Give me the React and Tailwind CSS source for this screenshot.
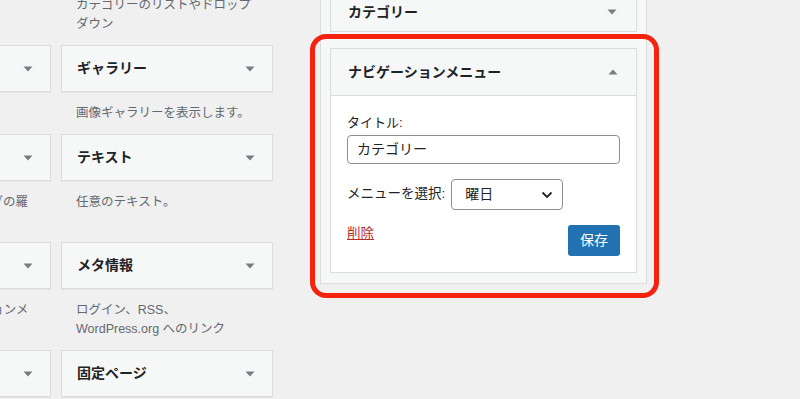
import React from "react";

const FONT = {
  fontFamily: '"Liberation Sans", "Noto Sans CJK JP", sans-serif',
};

const Caret = ({ up }) => (
  <svg width="10" height="6" viewBox="0 0 10 6" className="shrink-0">
    <polygon
      points={up ? "5,0.5 9.5,5.5 0.5,5.5" : "0.5,0.5 9.5,0.5 5,5.5"}
      fill="#787c82"
    />
  </svg>
);

const rows = [
  [
    { title: "アーカイブ", desc: ["月別アーカイブ。"] },
    { title: "カテゴリー", desc: ["カテゴリーのリストやドロップ", "ダウン"] },
  ],
  [
    { title: "カレンダー", desc: ["投稿のカレンダー。"] },
    { title: "ギャラリー", desc: ["画像ギャラリーを表示します。"] },
  ],
  [
    { title: "タグ", desc: ["最もよく使われているタグの羅", "列。"] },
    { title: "テキスト", desc: ["任意のテキスト。"] },
  ],
  [
    { title: "メニュー", desc: ["サイドバーにナビゲーションメ", "ニューを追加します。"] },
    { title: "メタ情報", desc: ["ログイン、RSS、", "WordPress.org へのリンク"] },
  ],
  [
    { title: "動画", desc: ["動画を表示します。"] },
    { title: "固定ページ", desc: ["固定ページのリスト。"] },
  ],
];

const WidgetItem = ({ item }) => (
  <div className="flex flex-col">
    <div className="h-[47px] bg-[#f6f7f7] border border-[#dcdcde] shadow-[0_1px_1px_rgba(0,0,0,0.04)] flex items-center justify-between pl-[15px] pr-[17px]">
      <span className="text-[14px] font-bold text-[#1d2327] whitespace-nowrap">
        {item.title}
      </span>
      <Caret />
    </div>
    <div className="pt-[12px] pb-[11px] px-[15px] text-[12.5px] leading-[19px] text-[#646970]">
      {item.desc.map((line, i) => (
        <div key={i} className="whitespace-nowrap">
          {line}
        </div>
      ))}
    </div>
  </div>
);

export default function App() {
  return (
    <div
      className="w-[800px] h-[399px] overflow-hidden bg-[#f0f0f1] flex items-start"
      style={FONT}
    >
      {/* available widgets */}
      <div className="ml-[-161px] mt-[-63px] w-[434px] shrink-0 flex flex-col">
        {rows.map((row, i) => (
          <div key={i} className="grid grid-cols-[212px_212px] gap-x-[10px]">
            {row.map((item, j) => (
              <WidgetItem key={j} item={item} />
            ))}
          </div>
        ))}
      </div>

      {/* sidebar */}
      <div className="ml-[47px] mt-[-40px] w-[327px] shrink-0 bg-[#f6f7f7] border border-[#dcdcde] px-[9px] pb-[10px] pt-[16px]">
        <div className="h-[55px] bg-[#f6f7f7] border border-[#dcdcde] flex items-end justify-between pl-[17px] pr-[19px] pb-[9px] mb-[16px]">
          <span className="text-[14px] leading-[20px] font-bold text-[#1d2327]">
            カテゴリー
          </span>
          <span className="pb-[7px]">
            <Caret />
          </span>
        </div>

        <div className="relative border border-[#dcdcde] bg-white">
          <div className="h-[47px] bg-[#f6f7f7] border-b border-[#dcdcde] flex items-center justify-between pl-[17px] pr-[18px]">
            <span className="text-[14px] font-bold text-[#1d2327]">
              ナビゲーションメニュー
            </span>
            <Caret up />
          </div>
          <div className="px-[16px] pt-[18px] pb-[16px] text-[13px] text-[#1d2327]">
            <div className="leading-[18px] mb-[3px]">タイトル:</div>
            <div className="h-[29px] border border-[#8c8f94] rounded-[4px] flex items-center px-[9px] text-[14px]">
              カテゴリー
            </div>
            <div className="flex items-center gap-[6px] mt-[15px]">
              <span className="text-[13.5px]">メニューを選択:</span>
              <div className="w-[112px] h-[31px] border border-[#8c8f94] rounded-[4px] flex items-center justify-between pl-[13px] pr-[9px] text-[14px]">
                <span>曜日</span>
                <svg width="12" height="8" viewBox="0 0 12 8">
                  <path
                    d="M1.5 1.5 L6 6 L10.5 1.5"
                    fill="none"
                    stroke="#1d2327"
                    strokeWidth="1.8"
                  />
                </svg>
              </div>
            </div>
            <div className="flex items-start justify-between mt-[15px]">
              <a className="text-[#b32d2e] text-[13.5px] underline leading-[18px] cursor-pointer">
                削除
              </a>
              <button className="w-[52px] h-[31px] bg-[#2271b1] rounded-[3px] text-white text-[14px]">
                保存
              </button>
            </div>
          </div>

          {/* highlight annotation */}
          <div className="absolute -left-[21px] -top-[15px] -right-[23px] -bottom-[26px] border-[5px] border-[#f5220e] rounded-[16px] pointer-events-none" />
        </div>
      </div>
    </div>
  );
}
